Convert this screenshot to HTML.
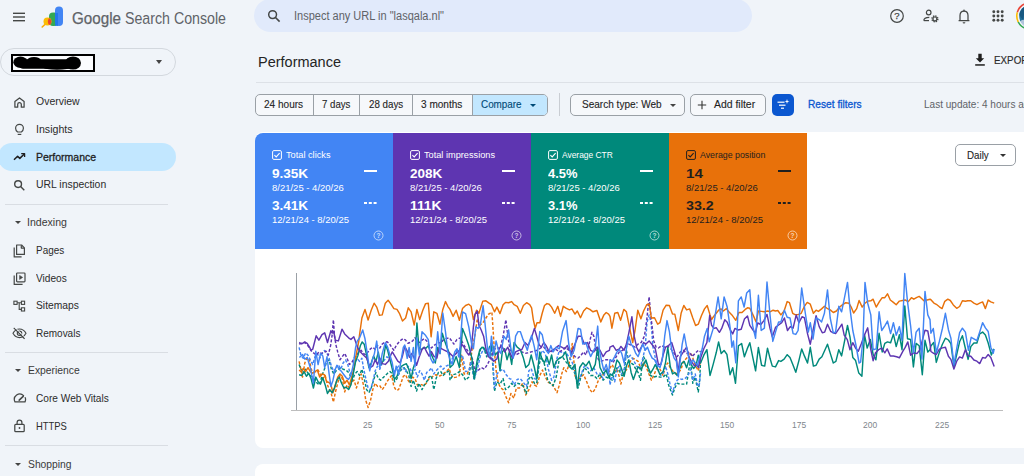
<!DOCTYPE html>
<html><head><meta charset="utf-8"><title>Performance</title>
<style>
*{box-sizing:border-box;margin:0;padding:0}
html,body{width:1024px;height:476px;overflow:hidden;background:#f0f4f9;font-family:"Liberation Sans",sans-serif;color:#1f1f1f}
.abs{position:absolute}
.tx{position:absolute;white-space:nowrap;transform-origin:0 50%;line-height:1}
#search{position:absolute;left:254px;top:-1px;width:498px;height:33.2px;border-radius:16.6px;background:#e1eafb}
#prop{position:absolute;left:0px;top:48px;width:176px;height:28px;border:1px solid #d3d8de;border-radius:14px}
#redact{position:absolute;left:10.5px;top:53.8px;width:84px;height:18.5px;border:2px solid #000;background:#fbfcfe}

.hr{position:absolute;left:5px;width:163px;height:1px;background:#d9dde3}
#active{position:absolute;left:-2px;top:143px;width:178px;height:28px;border-radius:14px;background:#c2e7ff}
.tri{position:absolute;width:0;height:0;border-left:3px solid transparent;border-right:3px solid transparent;border-top:4px solid #444}
#line1{position:absolute;left:256px;top:82px;width:768px;height:1px;background:#dde1e7}
#card{position:absolute;left:255px;top:132px;width:780px;height:315.5px;background:#fff;border-radius:8px}
#card2{position:absolute;left:255px;top:464px;width:780px;height:30px;background:#fff;border-radius:8px}
.m{position:absolute;top:133px;height:116px}
.chip{position:absolute;top:94px;height:22px;border:1px solid #9aa0a6;border-radius:5px;background:#f6f8fb}
</style></head><body>
<svg class="abs" style="left:12px;top:10.7px" width="14" height="12" viewBox="0 0 14 12"><g stroke="#444746" stroke-width="1.4"><line x1="1" y1="2.3" x2="13" y2="2.3"/><line x1="1" y1="6" x2="13" y2="6"/><line x1="1" y1="9.7" x2="13" y2="9.7"/></g></svg>
<svg class="abs" style="left:40px;top:5px" width="26" height="24" viewBox="0 0 26 24">
<line x1="2.2" y1="22" x2="6" y2="18.5" stroke="#f9ab00" stroke-width="1.6" stroke-linecap="round"/>
<rect x="9" y="7.5" width="9" height="13.5" rx="4" fill="#34a853"/>
<rect x="15" y="1.5" width="8" height="19.5" rx="4" fill="#4285f4"/>
<rect x="15" y="8" width="3" height="13" fill="#1a73e8" opacity=".75"/>
<circle cx="7.5" cy="16.5" r="4" fill="#fbbc04"/>
<path d="M9.2 12.9 A4 4 0 0 1 9.2 20.1 A6 6 0 0 1 9.2 12.9Z" fill="#ea4335"/>
</svg>
<div class="tx" id="t0" style="left:72px;top:9.8px;font-size:17.2px;transform:scaleX(0.8839);color:#5f6368;-webkit-text-stroke:.25px #5f6368">Google</div>
<div class="tx" id="t1" style="left:125px;top:9.8px;font-size:17.2px;transform:scaleX(0.8259);color:#5f6368">Search Console</div>
<div id="search"></div>
<svg class="abs" style="left:267px;top:9px" width="14" height="14" viewBox="0 0 14 14"><circle cx="5.6" cy="5.6" r="3.9" fill="none" stroke="#444746" stroke-width="1.5"/><line x1="8.5" y1="8.5" x2="12.6" y2="12.6" stroke="#444746" stroke-width="1.6"/></svg>
<div class="tx" id="t2" style="left:294px;top:10px;font-size:12px;transform:scaleX(0.9174);color:#5f6368">Inspect any URL in "lasqala.nl"</div>
<svg class="abs" style="left:889px;top:8px" width="16" height="16" viewBox="0 0 16 16"><circle cx="8" cy="8" r="6.3" fill="none" stroke="#444746" stroke-width="1.2"/><text x="8" y="11.4" font-size="9.5" font-family="Liberation Sans,sans-serif" text-anchor="middle" fill="#444746" stroke="#444746" stroke-width=".25">?</text></svg>
<svg class="abs" style="left:922px;top:8px" width="18" height="16" viewBox="0 0 18 16"><circle cx="6.7" cy="4.5" r="2.3" fill="none" stroke="#444746" stroke-width="1.2"/><path d="M1.8 12.6 C1.8 10.4 4 9.4 7.3 9.4" fill="none" stroke="#444746" stroke-width="1.2"/><line x1="1.8" y1="12.6" x2="7" y2="12.6" stroke="#444746" stroke-width="1.2"/><circle cx="12.9" cy="10.9" r="2.9" fill="none" stroke="#444746" stroke-width="1.5" stroke-dasharray="1.35 0.93"/><circle cx="12.9" cy="10.9" r="1.9" fill="none" stroke="#444746" stroke-width="1.2"/></svg>
<svg class="abs" style="left:955.6px;top:7.6px" width="16" height="18" viewBox="0 0 16 18"><path d="M4 12.6 V7.6 C4 4.8 5.6 3.1 8 3.1 C10.4 3.1 12 4.8 12 7.6 V12.6 M2.6 12.6 H13.4" fill="none" stroke="#444746" stroke-width="1.25"/><path d="M6.6 14.2 H9.4 A1.4 1.2 0 0 1 6.6 14.2Z" fill="#444746"/><rect x="7.3" y="1.6" width="1.4" height="1.8" rx=".5" fill="#444746"/></svg>
<svg class="abs" style="left:990.6px;top:9.3px" width="14" height="14" viewBox="0 0 14 14" fill="#444746"><circle cx="2.8" cy="2.8" r="1.45"/><circle cx="7.0" cy="2.8" r="1.45"/><circle cx="11.2" cy="2.8" r="1.45"/><circle cx="2.8" cy="7.0" r="1.45"/><circle cx="7.0" cy="7.0" r="1.45"/><circle cx="11.2" cy="7.0" r="1.45"/><circle cx="2.8" cy="11.2" r="1.45"/><circle cx="7.0" cy="11.2" r="1.45"/><circle cx="11.2" cy="11.2" r="1.45"/></svg>
<svg class="abs" style="left:1015px;top:1.3px" width="30" height="30" viewBox="0 0 30 30"><path d="M21.60 3.57 A13.2 13.2 0 0 0 2.31 11.36" fill="none" stroke="#ea4335" stroke-width="1.6"/><path d="M2.31 11.36 A13.2 13.2 0 0 0 3.24 20.99" fill="none" stroke="#fbbc04" stroke-width="1.6"/><path d="M3.24 20.99 A13.2 13.2 0 0 0 21.60 26.43" fill="none" stroke="#34a853" stroke-width="1.6"/><circle cx="15" cy="15" r="10.8" fill="#1f6f9a"/><path d="M5.5 20 Q9 17 12 21 L12 27 Q7 25 5.5 20Z" fill="#c9d3e6" opacity=".85"/><path d="M4.3 14 A10.8 10.8 0 0 1 9 6 L11 10 Q8 14 8 19 Z" fill="#15527a" opacity=".8"/></svg>
<div id="prop"></div><div id="redact"></div><svg class="abs" style="left:12px;top:55px" width="72" height="16" viewBox="0 0 72 16"><ellipse cx="8.5" cy="7.3" rx="7.2" ry="5.7" fill="#000"/><rect x="8" y="4.2" width="52" height="9.6" rx="3" fill="#000"/><ellipse cx="22" cy="5.5" rx="7" ry="3.6" fill="#000"/><ellipse cx="61" cy="8" rx="8" ry="6.6" fill="#000"/><ellipse cx="45" cy="12.2" rx="14" ry="2.6" fill="#000"/></svg><div class="tri" style="left:156px;top:60px"></div>
<div id="active"></div>
<div class="tx" id="t3" style="left:35.7px;top:96.2px;font-size:10.8px;transform:scaleX(0.9711);color:#2b2b2b;">Overview</div>
<div class="tx" id="t4" style="left:35.7px;top:123.99999999999999px;font-size:10.8px;transform:scaleX(0.9834);color:#2b2b2b;">Insights</div>
<div class="tx" id="t5" style="left:35.7px;top:151.70000000000002px;font-size:10.8px;transform:scaleX(0.9723);-webkit-text-stroke:.3px currentColor;">Performance</div>
<div class="tx" id="t6" style="left:35.7px;top:179.20000000000002px;font-size:10.8px;transform:scaleX(0.9639);color:#2b2b2b;">URL inspection</div>
<div class="tx" id="t7" style="left:35.7px;top:245.0px;font-size:10.8px;transform:scaleX(0.9208);color:#2b2b2b;">Pages</div>
<div class="tx" id="t8" style="left:35.7px;top:272.6px;font-size:10.8px;transform:scaleX(0.9382);color:#2b2b2b;">Videos</div>
<div class="tx" id="t9" style="left:35.8px;top:300.3px;font-size:10.8px;transform:scaleX(0.9508);color:#2b2b2b;">Sitemaps</div>
<div class="tx" id="t10" style="left:35.8px;top:327.8px;font-size:10.8px;transform:scaleX(0.9247);color:#2b2b2b;">Removals</div>
<div class="tx" id="t11" style="left:35.8px;top:393.3px;font-size:10.8px;transform:scaleX(0.9378);color:#2b2b2b;">Core Web Vitals</div>
<div class="tx" id="t12" style="left:35.8px;top:420.8px;font-size:10.8px;transform:scaleX(0.8731);color:#2b2b2b;">HTTPS</div>
<div class="tx" id="t13" style="left:27.3px;top:217.20000000000002px;font-size:10.8px;transform:scaleX(0.9773);color:#3a3a3a">Indexing</div>
<div class="tri" style="left:15px;top:221.1px;border-left-width:3px;border-right-width:3px;border-top-width:3.5px"></div>
<div class="tx" id="t14" style="left:27.6px;top:365.3px;font-size:10.8px;transform:scaleX(0.9587);color:#3a3a3a">Experience</div>
<div class="tri" style="left:15px;top:369.2px;border-left-width:3px;border-right-width:3px;border-top-width:3.5px"></div>
<div class="tx" id="t15" style="left:27.6px;top:458.8px;font-size:10.8px;transform:scaleX(0.9553);color:#3a3a3a">Shopping</div>
<div class="tri" style="left:15px;top:462.7px;border-left-width:3px;border-right-width:3px;border-top-width:3.5px"></div>
<div class="hr" style="top:204px"></div>
<div class="hr" style="top:352px"></div>
<div class="hr" style="top:445px"></div>
<svg class="abs" style="left:13px;top:95.5px" width="13" height="13" viewBox="0 0 13 13" fill="none" stroke="#444746" stroke-width="1.25" stroke-linejoin="round"><path d="M1.9 11.2 V5.6 L6.5 1.9 L11.1 5.6 V11.2 H8.3 V8.4 A1.8 1.8 0 0 0 4.7 8.4 V11.2 Z"/></svg>
<svg class="abs" style="left:13px;top:123px" width="13" height="13" viewBox="0 0 13 13" fill="none" stroke="#444746" stroke-width="1.2"><path d="M4.6 9 C3.3 8 2.6 7 2.6 5.3 A3.9 3.9 0 0 1 10.4 5.3 C10.4 7 9.7 8 8.4 9 Z"/><line x1="4.7" y1="11.4" x2="8.3" y2="11.4"/></svg>
<svg class="abs" style="left:13px;top:151px" width="13" height="12" viewBox="0 0 13 12" fill="none" stroke="#1f1f1f" stroke-width="1.5" stroke-linejoin="round"><path d="M1 8.8 L4.6 5.2 L6.8 7.4 L11 3.2"/><path d="M8.2 2.6 H11.6 V6" stroke-width="1.3"/></svg>
<svg class="abs" style="left:13px;top:179px" width="13" height="13" viewBox="0 0 13 13" fill="none" stroke="#444746" stroke-width="1.4"><circle cx="5.1" cy="5.1" r="3.4"/><line x1="7.6" y1="7.6" x2="11.3" y2="11.3"/></svg>
<svg class="abs" style="left:12.5px;top:243.5px" width="13" height="14" viewBox="0 0 13 14" fill="none" stroke="#444746" stroke-width="1.2" stroke-linejoin="round"><path d="M3.6 1 H8.6 L11.4 3.8 V10.4 H3.6 Z"/><path d="M8.3 1.2 V4.1 H11.2"/><path d="M1.2 3.6 V12.9 H8.6"/></svg>
<svg class="abs" style="left:12.5px;top:271.5px" width="13" height="14" viewBox="0 0 13 14" fill="none" stroke="#444746" stroke-width="1.2" stroke-linejoin="round"><rect x="3.6" y="1" width="8.4" height="8.8" rx="0.8"/><path d="M6.6 3.4 L9.6 5.4 L6.6 7.4 Z" fill="#444746" stroke-width=".6"/><path d="M1.2 3.4 V12.4 H9.6"/></svg>
<svg class="abs" style="left:13px;top:299.5px" width="13" height="13" viewBox="0 0 13 13" fill="none" stroke="#444746" stroke-width="1.1"><rect x="0.9" y="1.2" width="3.2" height="3.2"/><rect x="8.4" y="1.2" width="3.2" height="3.2"/><rect x="8.4" y="7.8" width="3.2" height="3.2"/><path d="M4.1 2.8 H8.4 M6.2 2.8 V9.4 H8.4"/></svg>
<svg class="abs" style="left:12px;top:327px" width="15" height="13" viewBox="0 0 15 13" fill="none" stroke="#444746" stroke-width="1.15"><path d="M1 6.3 C2.6 3.4 4.8 2 7.5 2 C10.2 2 12.4 3.4 14 6.3 C12.4 9.2 10.2 10.6 7.5 10.6 C4.8 10.6 2.6 9.2 1 6.3Z"/><circle cx="7.5" cy="6.3" r="2.2"/><line x1="1.8" y1="0.9" x2="12.6" y2="11.8" stroke-width="1.3"/><line x1="2.8" y1="0.2" x2="13.6" y2="11.1" stroke="#f0f4f9" stroke-width="1"/></svg>
<svg class="abs" style="left:12.5px;top:392px" width="14" height="13" viewBox="0 0 14 13" fill="none" stroke="#444746" stroke-width="1.25" stroke-linecap="round"><path d="M10.6 3.6 A5.4 5.4 0 0 0 2 9.9 H12 A5.4 5.4 0 0 0 12.2 5.6"/><path d="M6.2 8.2 L10.2 4.4" stroke-width="1.6"/></svg>
<svg class="abs" style="left:13px;top:419px" width="13" height="14" viewBox="0 0 13 14" fill="none" stroke="#444746" stroke-width="1.25"><rect x="1.8" y="5.4" width="9.4" height="7.2" rx="0.9"/><path d="M4.1 5.4 V3.6 A2.4 2.4 0 0 1 8.9 3.6 V5.4"/><circle cx="6.5" cy="9" r="0.9" fill="#444746" stroke="none"/></svg>

<div class="tx" id="t16" style="left:258px;top:54.6px;font-size:14.7px;transform:scaleX(0.9870);color:#242424">Performance</div>
<svg class="abs" style="left:974px;top:53px" width="12" height="14" viewBox="0 0 12 14" fill="#1f1f1f"><path d="M4.3 0.8 H7.7 V5.2 H10.2 L6 9.6 L1.8 5.2 H4.3Z"/><rect x="1.2" y="11.2" width="9.6" height="1.5"/></svg>
<div class="tx" id="t17" style="left:993.8px;top:56.3px;font-size:10.4px;transform:scaleX(0.9448);-webkit-text-stroke:.15px currentColor;color:#2b2b2b">EXPORT</div>
<div id="line1"></div>
<div class="abs" style="left:255px;top:94px;width:293px;height:22px;border:1px solid #9aa0a6;border-radius:5px;background:#f6f8fb;overflow:hidden">
 <div class="abs" style="left:216px;top:-1px;width:77px;height:22px;background:#c2e7ff"></div>
 <div class="abs" style="left:56.5px;top:-1px;width:1px;height:22px;background:#9aa0a6"></div>
 <div class="abs" style="left:103px;top:-1px;width:1px;height:22px;background:#9aa0a6"></div>
 <div class="abs" style="left:156px;top:-1px;width:1px;height:22px;background:#9aa0a6"></div>
 <div class="abs" style="left:215.5px;top:-1px;width:1px;height:22px;background:#9aa0a6"></div>
</div>
<div class="tx" id="t18" style="left:264.2px;top:100.2px;font-size:10.3px;transform:scaleX(0.9756);-webkit-text-stroke:.12px currentColor;">24 hours</div>
<div class="tx" id="t19" style="left:321.8px;top:100.2px;font-size:10.3px;transform:scaleX(0.9359);-webkit-text-stroke:.12px currentColor;">7 days</div>
<div class="tx" id="t20" style="left:368.7px;top:100.2px;font-size:10.3px;transform:scaleX(0.9479);-webkit-text-stroke:.12px currentColor;">28 days</div>
<div class="tx" id="t21" style="left:421.4px;top:100.2px;font-size:10.3px;transform:scaleX(0.9774);-webkit-text-stroke:.12px currentColor;">3 months</div>
<div class="tx" id="t22" style="left:480.7px;top:100.2px;font-size:10.3px;transform:scaleX(0.9585);-webkit-text-stroke:.12px currentColor;color:#004a77">Compare</div>
<div class="tri" style="left:529.5px;top:104px;border-top-color:#004a77;border-left-width:3px;border-right-width:3px;border-top-width:3.5px"></div>
<div class="abs" style="left:559px;top:93px;width:1px;height:23px;background:#c9cdd3"></div>
<div class="chip" style="left:570px;width:115px"></div>
<div class="tx" id="t23" style="left:581.5px;top:100.2px;font-size:10.3px;transform:scaleX(0.9748);-webkit-text-stroke:.12px currentColor;">Search type: Web</div>
<div class="tri" style="left:669.5px;top:104px;border-left-width:3px;border-right-width:3px;border-top-width:3.5px"></div>
<div class="chip" style="left:690px;width:76px"></div>
<svg class="abs" style="left:697px;top:100px" width="10" height="10" viewBox="0 0 10 10"><path d="M5 0.8V9.2M0.8 5H9.2" stroke="#333" stroke-width="1.1"/></svg>
<div class="tx" id="t24" style="left:713.9px;top:100.2px;font-size:10.3px;transform:scaleX(1.0113);-webkit-text-stroke:.12px currentColor;">Add filter</div>
<div class="abs" style="left:772px;top:94px;width:22px;height:22px;border-radius:5px;background:#0b57d0"></div>
<svg class="abs" style="left:776px;top:98px" width="14" height="14" viewBox="0 0 14 14"><g stroke="#fff" stroke-width="1.2"><line x1="1.5" y1="4.2" x2="8.5" y2="4.2"/><line x1="3" y1="7.2" x2="9.5" y2="7.2"/><line x1="5" y1="10.2" x2="8" y2="10.2"/></g><path d="M11 1 L11.6 2.9 L13.5 3.5 L11.6 4.1 L11 6 L10.4 4.1 L8.5 3.5 L10.4 2.9Z" fill="#fff"/></svg>
<div class="tx" id="t25" style="left:808.3px;top:100.2px;font-size:10.3px;transform:scaleX(0.9876);-webkit-text-stroke:.3px currentColor;color:#0b57d0">Reset filters</div>
<div class="tx" id="t26" style="left:924px;top:100.2px;font-size:10.3px;transform:scaleX(0.9742);color:#5f6368">Last update: 4 hours ago</div>
<div id="card"></div><div id="card2"></div>
<div class="m" style="left:255px;width:138px;background:#4285f4;border-radius:8px 0 0 0;"></div>
<svg class="abs" style="left:271.5px;top:150px" width="10" height="10" viewBox="0 0 10 10"><rect x="0.6" y="0.6" width="8.8" height="8.8" rx="1.3" fill="none" stroke="#fff" stroke-width="1"/><path d="M2.4 5.1 L4.2 6.9 L7.6 3.2" fill="none" stroke="#fff" stroke-width="1.1"/></svg>
<div class="tx" id="t27" style="left:285.5px;top:149.8px;font-size:9.6px;transform:scaleX(0.9592);color:#fff">Total clicks</div>
<div class="tx" id="t28" style="left:271.9px;top:166.9px;font-size:13.6px;color:#fff;font-weight:bold">9.35K</div>
<div class="tx" id="t29" style="left:271.9px;top:182.7px;font-size:9.4px;transform:scaleX(1.0128);color:#fff">8/21/25 - 4/20/26</div>
<div class="tx" id="t30" style="left:271.9px;top:199.3px;font-size:13.6px;color:#fff;font-weight:bold">3.41K</div>
<div class="tx" id="t31" style="left:271.9px;top:214.9px;font-size:9.4px;transform:scaleX(1.0117);color:#fff">12/21/24 - 8/20/25</div>
<div class="abs" style="left:363.5px;top:170.4px;width:13px;height:2px;background:#fff"></div>
<div class="abs" style="left:363.5px;top:202.2px;width:3.4px;height:1.8px;background:#fff;box-shadow:4.8px 0 0 #fff,9.6px 0 0 #fff"></div>
<svg class="abs" style="left:373.2px;top:230.2px;opacity:.7" width="11" height="11" viewBox="0 0 11 11"><circle cx="5.5" cy="5.5" r="4.5" fill="none" stroke="#fff" stroke-width="0.9"/><text x="5.5" y="8" font-size="6.5" font-family="Liberation Sans,sans-serif" text-anchor="middle" fill="#fff" font-weight="bold">?</text></svg>
<div class="m" style="left:393px;width:138px;background:#5e35b1;"></div>
<svg class="abs" style="left:409.5px;top:150px" width="10" height="10" viewBox="0 0 10 10"><rect x="0.6" y="0.6" width="8.8" height="8.8" rx="1.3" fill="none" stroke="#fff" stroke-width="1"/><path d="M2.4 5.1 L4.2 6.9 L7.6 3.2" fill="none" stroke="#fff" stroke-width="1.1"/></svg>
<div class="tx" id="t32" style="left:423.5px;top:149.8px;font-size:9.6px;transform:scaleX(0.9578);color:#fff">Total impressions</div>
<div class="tx" id="t33" style="left:409.9px;top:166.9px;font-size:13.6px;transform:scaleX(0.9938);color:#fff;font-weight:bold">208K</div>
<div class="tx" id="t34" style="left:409.9px;top:182.7px;font-size:9.4px;transform:scaleX(1.0128);color:#fff">8/21/25 - 4/20/26</div>
<div class="tx" id="t35" style="left:409.9px;top:199.3px;font-size:13.6px;transform:scaleX(1.0161);color:#fff;font-weight:bold">111K</div>
<div class="tx" id="t36" style="left:409.9px;top:214.9px;font-size:9.4px;transform:scaleX(1.0117);color:#fff">12/21/24 - 8/20/25</div>
<div class="abs" style="left:501.5px;top:170.4px;width:13px;height:2px;background:#fff"></div>
<div class="abs" style="left:501.5px;top:202.2px;width:3.4px;height:1.8px;background:#fff;box-shadow:4.8px 0 0 #fff,9.6px 0 0 #fff"></div>
<svg class="abs" style="left:511.2px;top:230.2px;opacity:.7" width="11" height="11" viewBox="0 0 11 11"><circle cx="5.5" cy="5.5" r="4.5" fill="none" stroke="#fff" stroke-width="0.9"/><text x="5.5" y="8" font-size="6.5" font-family="Liberation Sans,sans-serif" text-anchor="middle" fill="#fff" font-weight="bold">?</text></svg>
<div class="m" style="left:531px;width:138px;background:#00897b;"></div>
<svg class="abs" style="left:547.5px;top:150px" width="10" height="10" viewBox="0 0 10 10"><rect x="0.6" y="0.6" width="8.8" height="8.8" rx="1.3" fill="none" stroke="#fff" stroke-width="1"/><path d="M2.4 5.1 L4.2 6.9 L7.6 3.2" fill="none" stroke="#fff" stroke-width="1.1"/></svg>
<div class="tx" id="t37" style="left:561.5px;top:149.8px;font-size:9.6px;transform:scaleX(0.8766);color:#fff">Average CTR</div>
<div class="tx" id="t38" style="left:547.9px;top:166.9px;font-size:13.6px;transform:scaleX(0.9489);color:#fff;font-weight:bold">4.5%</div>
<div class="tx" id="t39" style="left:547.9px;top:182.7px;font-size:9.4px;transform:scaleX(1.0128);color:#fff">8/21/25 - 4/20/26</div>
<div class="tx" id="t40" style="left:547.9px;top:199.3px;font-size:13.6px;transform:scaleX(0.9489);color:#fff;font-weight:bold">3.1%</div>
<div class="tx" id="t41" style="left:547.9px;top:214.9px;font-size:9.4px;transform:scaleX(1.0117);color:#fff">12/21/24 - 8/20/25</div>
<div class="abs" style="left:639.5px;top:170.4px;width:13px;height:2px;background:#fff"></div>
<div class="abs" style="left:639.5px;top:202.2px;width:3.4px;height:1.8px;background:#fff;box-shadow:4.8px 0 0 #fff,9.6px 0 0 #fff"></div>
<svg class="abs" style="left:649.2px;top:230.2px;opacity:.7" width="11" height="11" viewBox="0 0 11 11"><circle cx="5.5" cy="5.5" r="4.5" fill="none" stroke="#fff" stroke-width="0.9"/><text x="5.5" y="8" font-size="6.5" font-family="Liberation Sans,sans-serif" text-anchor="middle" fill="#fff" font-weight="bold">?</text></svg>
<div class="m" style="left:669px;width:138px;background:#e8710a;"></div>
<svg class="abs" style="left:685.5px;top:150px" width="10" height="10" viewBox="0 0 10 10"><rect x="0.6" y="0.6" width="8.8" height="8.8" rx="1.3" fill="none" stroke="#1f1f1f" stroke-width="1"/><path d="M2.4 5.1 L4.2 6.9 L7.6 3.2" fill="none" stroke="#1f1f1f" stroke-width="1.1"/></svg>
<div class="tx" id="t42" style="left:699.5px;top:149.8px;font-size:9.6px;transform:scaleX(0.9159);color:#1f1f1f">Average position</div>
<div class="tx" id="t43" style="left:685.9px;top:166.9px;font-size:13.6px;transform:scaleX(1.1174);color:#1f1f1f;font-weight:bold">14</div>
<div class="tx" id="t44" style="left:685.9px;top:182.7px;font-size:9.4px;transform:scaleX(1.0128);color:#1f1f1f">8/21/25 - 4/20/26</div>
<div class="tx" id="t45" style="left:685.9px;top:199.3px;font-size:13.6px;transform:scaleX(1.0465);color:#1f1f1f;font-weight:bold">33.2</div>
<div class="tx" id="t46" style="left:685.9px;top:214.9px;font-size:9.4px;transform:scaleX(1.0117);color:#1f1f1f">12/21/24 - 8/20/25</div>
<div class="abs" style="left:777.5px;top:170.4px;width:13px;height:2px;background:#1f1f1f"></div>
<div class="abs" style="left:777.5px;top:202.2px;width:3.4px;height:1.8px;background:#1f1f1f;box-shadow:4.8px 0 0 #1f1f1f,9.6px 0 0 #1f1f1f"></div>
<svg class="abs" style="left:787.2px;top:230.2px;opacity:.7" width="11" height="11" viewBox="0 0 11 11"><circle cx="5.5" cy="5.5" r="4.5" fill="none" stroke="#fff" stroke-width="0.9"/><text x="5.5" y="8" font-size="6.5" font-family="Liberation Sans,sans-serif" text-anchor="middle" fill="#fff" font-weight="bold">?</text></svg>
<div class="abs" style="left:955px;top:144px;width:61px;height:22px;border:1px solid #9aa0a6;border-radius:5px;background:#fff"></div>
<div class="tx" id="t47" style="left:967.3px;top:149.5px;font-size:10.8px;transform:scaleX(0.9042);-webkit-text-stroke:.12px currentColor;">Daily</div>
<div class="tri" style="left:1000px;top:153.5px;border-left-width:3px;border-right-width:3px;border-top-width:3.5px;border-top-color:#333"></div>
<div class="abs" style="left:296px;top:273px;width:1px;height:138px;background:#9aa0a6"></div>
<div class="abs" style="left:291px;top:410px;width:712px;height:1px;background:#bdbdbd"></div>
<div class="tx" id="t48" style="left:363.3px;top:421px;font-size:8.8px;transform:scaleX(0.9595);color:#80868b">25</div>
<div class="tx" id="t49" style="left:435.3px;top:421px;font-size:8.8px;transform:scaleX(0.9595);color:#80868b">50</div>
<div class="tx" id="t50" style="left:506.8px;top:421px;font-size:8.8px;transform:scaleX(0.9595);color:#80868b">75</div>
<div class="tx" id="t51" style="left:576.25px;top:421px;font-size:8.8px;transform:scaleX(0.9600);color:#80868b">100</div>
<div class="tx" id="t52" style="left:647.95px;top:421px;font-size:8.8px;transform:scaleX(0.9600);color:#80868b">125</div>
<div class="tx" id="t53" style="left:719.95px;top:421px;font-size:8.8px;transform:scaleX(0.9600);color:#80868b">150</div>
<div class="tx" id="t54" style="left:791.95px;top:421px;font-size:8.8px;transform:scaleX(0.9600);color:#80868b">175</div>
<div class="tx" id="t55" style="left:863.45px;top:421px;font-size:8.8px;transform:scaleX(0.9600);color:#80868b">200</div>
<div class="tx" id="t56" style="left:934.95px;top:421px;font-size:8.8px;transform:scaleX(0.9600);color:#80868b">225</div>
<svg class="abs" style="left:0;top:0" width="1024" height="476" viewBox="0 0 1024 476" fill="none" stroke-linejoin="round">
<polyline points="299.1,361.4 300.9,369.2 302.5,377.1 304.8,363.0 307.2,357.5 309.5,359.9 311.1,369.2 313.4,372.4 315.8,371.6 318.1,370.0 320.5,374.7 322.8,378.6 325.2,375.5 327.5,384.9 329.8,391.1 331.4,394.2 333.4,402.1 335.3,392.7 337.7,383.3 340.0,375.5 342.3,378.6 344.7,391.9 347.0,384.9 349.4,388.0 351.7,381.8 354.1,380.2 356.4,388.0 358.8,380.2 361.1,373.9 363.4,384.9 365.8,400.5 368.1,407.5 370.5,400.5 372.8,389.6 375.2,383.3 377.5,386.4 379.8,385.7 382.2,389.6 384.5,386.4 386.9,381.8 389.2,378.6 391.6,375.5 393.9,386.4 396.2,390.3 398.6,389.6 400.9,383.3 403.3,376.3 405.6,374.7 408.0,380.2 410.3,383.3 412.7,377.1 415.0,378.6 417.3,384.9 419.7,384.1 422.0,384.9 424.4,385.7 426.7,382.5 429.1,378.6 431.4,377.8 433.8,375.5 436.1,374.7 438.4,376.3 440.8,375.5 443.1,373.9 446.2,371.6 449.4,368.5 450.0,371.6 453.1,377.8 456.2,377.1 459.4,375.5 461.7,355.2 464.1,373.9 467.2,373.9 469.5,369.2 471.9,350.5 475.0,334.7 477.3,319.1 479.7,325.3 482.8,323.0 485.2,319.1 488.3,314.4 491.9,312.1 493.0,328.5 494.5,351.9 496.1,370.7 498.4,383.3 500.8,388.0 503.1,389.6 506.2,397.4 508.6,402.8 510.9,393.5 513.8,398.2 516.4,388.0 519.5,388.0 522.7,383.3 525.8,395.0 528.9,389.6 532.0,381.8 534.4,384.9 536.7,386.4 539.8,375.5 542.5,370.0 545.3,377.1 548.4,382.5 551.6,383.3 554.4,388.0 557.0,392.7 559.4,384.9 561.7,373.9 563.8,367.7 566.4,371.6 568.8,365.3 571.1,352.1 572.2,343.5 573.4,355.2 575.0,375.5 577.3,381.8 580.5,377.1 583.6,374.7 586.7,381.8 589.8,389.6 592.5,392.7 595.3,388.8 598.4,380.2 600.8,377.1 603.9,373.9 606.2,369.2 609.4,371.6 610.0,367.7 612.3,364.6 614.7,370.8 617.0,369.2 619.4,377.1 620.9,384.1 623.3,373.9 625.6,370.8 628.0,367.7 630.3,361.4 632.7,358.3 635.0,359.1 638.1,361.4 641.2,369.2 643.6,363.0 645.9,366.1 648.3,372.4 651.4,380.2 653.8,375.5 656.9,367.7 660.0,369.2 663.1,375.5 665.5,366.1 667.8,363.0 670.2,367.7 672.5,370.8 675.6,373.9 678.8,372.4 681.1,369.2 683.4,361.4 686.6,358.3 689.7,352.8 692.0,355.2 694.4,363.0 696.7,367.7 698.3,370.8 700.6,361.4" stroke="#e8710a" stroke-width="1.45" stroke-dasharray="3 1.8"/>
<polyline points="299.1,364.6 300.9,369.2 303.3,371.6 305.6,369.2 308.0,373.2 310.3,375.5 312.7,377.1 315.0,380.2 317.3,383.3 319.7,384.9 322.0,375.5 324.4,369.2 326.7,361.4 329.1,359.9 331.4,369.2 333.8,373.9 336.1,370.8 338.4,369.2 340.8,367.7 343.1,369.2 345.5,370.0 347.8,371.6 350.2,375.5 352.5,380.2 354.8,373.9 357.2,371.6 359.5,375.5 361.9,369.2 364.2,378.6 366.6,389.6 368.9,392.7 371.2,388.0 373.6,380.2 375.9,372.4 378.3,378.6 380.6,380.2 383.0,377.8 385.3,375.5 387.7,373.2 390.0,371.6 392.3,373.9 394.7,381.8 397.0,378.6 399.4,372.4 401.7,369.2 404.1,367.7 406.4,370.8 408.8,375.5 411.1,386.4 413.4,380.2 416.6,391.1 418.9,383.3 422.0,389.6 424.4,384.9 426.7,381.8 429.1,377.1 431.4,375.5 433.8,389.6 436.1,378.6 438.4,372.4 440.8,371.6 443.1,375.5 446.2,372.4 449.4,370.8 450.0,380.2 453.1,374.7 456.2,373.9 459.4,371.6 462.5,374.7 465.6,380.2 468.8,377.1 471.1,361.4 474.2,380.2 477.3,364.6 480.5,348.9 483.6,347.4 486.7,356.8 489.8,345.8 491.4,344.2 493.0,369.2 494.5,391.1 496.9,381.8 500.0,384.1 503.1,378.6 505.5,389.6 508.6,387.2 511.7,383.3 514.1,386.4 517.2,383.3 520.3,384.1 523.4,386.4 526.2,393.5 528.9,378.6 531.2,376.3 534.4,383.3 536.7,383.3 539.1,364.6 541.4,356.8 544.5,364.6 547.7,380.2 550.8,384.1 553.1,385.7 556.2,377.1 559.4,358.3 562.5,356.8 565.6,361.4 568.8,365.3 571.9,366.1 575.0,373.9 578.1,388.0 581.2,375.5 584.4,367.7 587.5,370.8 590.6,375.5 593.8,375.5 596.9,378.6 600.0,373.9 603.1,380.2 606.2,377.1 609.4,378.6 610.0,378.6 612.3,380.2 614.7,372.4 617.0,367.7 619.4,370.8 621.7,375.5 624.1,375.5 626.4,350.5 628.8,361.4 631.1,363.0 633.4,364.6 635.8,369.2 638.1,372.4 640.5,380.2 642.0,364.6 643.6,356.8 645.9,361.4 648.3,369.2 650.6,375.5 653.8,377.1 656.9,376.3 660.0,377.1 663.1,377.1 666.2,373.9 668.6,384.9 670.9,391.1 672.5,395.0 674.8,388.0 677.2,383.3 680.3,384.1 683.4,384.1 686.6,384.1 688.9,369.2 690.5,361.4 692.8,383.3 695.2,377.1 696.7,384.9 698.3,391.9 699.8,378.6 700.6,358.3" stroke="#00897b" stroke-width="1.45" stroke-dasharray="3 1.8"/>
<polyline points="299.1,347.4 300.9,355.2 303.3,358.3 305.6,352.8 308.0,355.2 310.3,359.9 312.7,364.6 315.0,356.8 317.3,353.6 319.7,358.3 322.0,353.6 324.4,350.5 326.7,352.8 329.1,358.3 331.4,366.1 333.8,371.6 336.1,367.7 338.4,364.6 340.8,369.2 343.1,363.0 345.5,359.9 347.8,364.6 350.2,373.9 352.5,370.8 354.8,363.0 357.2,358.3 359.5,361.4 361.9,358.3 363.4,367.7 365.8,378.6 368.1,388.0 370.5,389.6 372.8,381.8 375.2,370.8 377.5,366.1 379.8,369.2 382.2,363.0 384.5,359.9 386.9,356.8 389.2,358.3 391.6,363.0 393.9,372.4 396.2,369.2 398.6,366.1 400.9,370.0 403.3,367.7 405.6,371.6 408.0,366.1 410.3,369.2 412.7,373.9 415.0,369.2 417.3,377.1 419.7,370.8 422.0,373.9 424.4,380.2 426.7,372.4 429.1,370.8 431.4,367.7 433.8,373.9 436.1,370.8 438.4,368.5 440.8,366.1 443.1,369.2 446.2,366.1 449.4,364.6 453.1,356.8 456.2,350.5 459.4,358.3 462.5,355.2 465.6,371.6 468.8,370.8 471.1,361.4 474.2,378.6 477.3,369.2 480.5,355.2 483.6,348.9 486.7,353.6 489.8,347.4 491.4,342.7 493.0,361.4 494.5,388.0 496.9,373.9 500.0,370.8 503.1,369.2 506.2,374.7 509.4,378.6 511.7,379.4 514.1,384.9 517.2,379.4 520.3,378.6 523.4,382.5 526.6,386.4 528.9,370.8 531.2,368.5 534.4,378.6 536.7,379.4 539.1,358.3 542.2,350.5 545.3,353.6 548.4,369.2 551.6,380.2 553.9,377.1 557.0,358.3 559.4,350.5 562.5,353.6 565.6,352.1 568.8,356.8 571.9,361.4 575.0,371.6 578.1,383.3 581.2,373.9 584.4,366.1 587.5,367.7 590.6,370.8 593.8,367.7 596.9,373.9 600.0,373.2 603.1,378.6 606.2,369.2 609.4,375.5 610.0,384.9 612.3,373.9 614.7,381.8 617.0,369.2 619.4,366.1 621.7,373.9 624.1,369.2 625.6,353.6 628.0,358.3 630.3,355.2 633.4,359.9 636.6,366.1 639.7,369.2 642.8,358.3 645.2,347.4 647.0,322.4 649.1,314.9 651.1,322.4 653.0,347.4 656.1,361.4 658.4,370.8 660.8,375.5 663.1,373.2 665.5,366.1 667.8,373.9 670.2,384.9 672.5,392.7 674.8,384.9 677.2,380.2 679.5,378.6 681.9,379.4 685.0,378.6 688.1,375.5 690.5,369.2 692.8,380.2 695.2,373.9 697.5,384.9 699.1,386.4 700.6,372.4" stroke="#4285f4" stroke-width="1.45" stroke-dasharray="3 1.8"/>
<polyline points="299.1,344.1 301.7,343.3 304.8,342.5 307.2,344.8 309.5,348.0 311.9,351.9 314.2,353.4 316.6,355.0 318.9,351.9 321.2,353.4 323.6,352.7 325.9,351.1 328.3,355.0 330.6,345.6 332.2,334.7 333.4,319.8 334.5,336.2 336.1,345.6 337.7,351.9 340.0,359.7 342.3,356.6 344.7,353.4 347.0,358.1 349.4,364.4 351.7,362.8 354.1,358.1 356.4,355.8 358.8,351.9 361.1,350.3 363.4,353.4 365.8,355.0 368.1,351.9 370.5,348.8 372.8,347.2 375.2,349.5 377.5,345.6 379.8,348.0 382.2,344.1 384.5,342.5 386.9,341.7 389.2,343.3 391.6,347.2 393.9,350.3 396.2,345.6 398.6,342.5 400.9,340.2 403.3,338.6 405.6,340.2 408.0,343.3 410.3,342.5 412.7,340.9 415.0,337.8 417.3,340.9 419.7,342.5 422.0,340.2 424.4,338.6 426.7,340.9 429.1,345.6 431.4,348.0 433.8,345.6 436.1,344.1 438.4,342.5 440.8,343.3 443.1,340.2 446.2,338.6 449.4,337.8 453.9,344.1 457.0,339.4 460.2,337.8 463.3,344.1 466.4,348.8 469.5,353.4 472.7,359.7 475.0,372.2 478.1,370.6 481.2,367.5 484.4,369.1 487.5,364.4 490.6,358.1 493.8,350.3 496.9,347.2 500.0,348.8 503.1,336.2 505.9,319.8 507.8,336.2 510.2,350.3 512.5,351.9 515.6,355.0 518.8,353.4 521.9,351.9 525.0,353.4 528.1,352.7 531.2,351.9 534.4,351.1 537.5,350.3 540.6,348.0 543.8,347.2 546.9,350.3 550.0,351.9 553.1,351.1 556.2,349.5 559.4,351.9 562.5,350.3 565.6,347.2 568.8,350.3 571.9,353.4 575.0,356.6 578.1,358.1 581.2,355.0 583.6,351.9 585.9,355.0 589.1,344.1 591.9,332.3 593.8,336.2 596.1,350.3 598.4,359.7 601.6,361.2 604.7,359.7 607.8,359.7 610.0,359.7 613.1,362.8 616.2,356.6 619.4,351.9 622.5,350.3 625.6,347.2 628.8,344.1 631.9,345.6 635.0,347.2 638.1,344.1 641.2,342.5 644.4,336.2 646.7,320.6 649.1,296.9 651.4,320.6 653.8,340.9 656.1,347.2 658.4,348.0 661.6,345.6 664.7,347.2 667.8,346.4 670.9,348.8 674.1,353.4 677.2,356.6 680.3,351.9 683.4,350.3 686.6,353.4 689.7,351.9 692.0,356.6 695.2,353.4 698.3,350.3 700.6,351.9" stroke="#5e35b1" stroke-width="1.45" stroke-dasharray="3 1.8"/>
<polyline points="299.1,370.0 300.9,371.6 303.3,368.5 305.6,371.6 308.0,367.7 310.3,371.6 312.7,373.2 315.0,371.6 317.3,370.0 319.7,377.1 322.0,373.9 324.4,374.7 326.7,381.8 329.1,382.5 330.9,384.9 333.0,392.7 335.3,384.9 337.7,377.1 340.0,373.9 342.3,376.3 344.7,383.3 347.0,380.2 349.4,384.9 351.7,377.1 354.1,367.7 356.4,353.6 358.8,341.1 359.5,335.2 361.9,318.0 365.0,309.4 368.1,320.0 371.2,310.2 374.1,303.2 376.7,307.1 379.4,315.2 382.2,314.9 385.3,303.2 388.1,300.3 390.8,303.9 393.9,308.6 397.0,309.4 399.4,313.3 402.5,321.1 405.6,318.0 408.3,307.8 411.1,311.8 414.2,325.0 416.9,309.4 419.7,319.6 422.8,310.2 425.6,303.6 428.3,303.2 431.1,336.8 433.8,311.8 436.9,313.3 440.0,324.2 442.8,309.4 445.5,301.6 447.8,306.3 450.0,309.4 453.1,316.4 456.2,310.2 459.4,320.3 462.5,308.6 465.6,305.5 468.8,304.2 471.1,306.3 473.4,319.6 476.6,310.2 478.9,313.3 482.8,301.1 485.9,300.8 489.1,303.2 491.4,304.7 494.5,311.8 496.9,307.1 500.0,313.6 503.1,304.7 505.5,302.4 508.6,302.7 511.7,301.6 514.1,304.7 517.2,306.3 520.3,313.3 523.4,305.5 526.6,302.7 529.7,304.7 531.6,307.8 533.3,319.6 535.2,328.2 537.0,322.7 539.8,322.7 542.2,313.3 544.5,305.5 546.9,303.6 549.2,304.2 551.6,307.1 554.7,313.3 557.8,306.3 560.6,316.4 563.3,306.3 566.4,308.3 569.5,309.9 571.9,308.9 575.0,314.1 577.3,311.0 580.5,317.7 583.6,311.0 586.7,307.8 589.8,309.4 593.0,311.8 596.9,310.5 600.8,321.9 603.9,314.9 606.2,312.5 608.6,314.1 610.0,316.4 611.9,328.2 614.7,313.3 617.8,312.5 620.6,320.3 623.8,309.4 626.4,311.8 629.5,327.4 632.7,342.5 635.0,330.5 637.8,310.2 640.9,318.8 643.6,311.0 646.7,304.7 649.1,303.9 651.4,318.0 654.5,317.7 657.7,324.2 660.0,322.7 663.1,310.2 666.2,305.2 669.4,305.5 672.5,314.1 674.8,314.1 678.3,330.5 681.1,313.3 683.8,305.5 686.6,309.9 689.7,308.9 692.8,318.0 695.6,325.5 698.3,324.2 701.4,315.7 704.5,308.9 707.2,305.5 710.0,314.9 711.6,319.6 713.1,317.2 716.2,313.3 718.6,310.2 720.9,308.9 723.3,311.0 726.4,308.6 728.8,311.8 731.9,314.9 735.8,320.3 738.9,312.5 742.0,312.5 745.2,309.4 747.5,307.8 749.8,308.3 753.0,314.9 756.1,321.9 758.4,311.0 761.6,311.4 764.7,311.8 767.8,311.0 770.0,311.8 773.1,310.2 775.5,311.0 777.8,310.5 780.9,314.9 784.1,311.0 787.2,301.6 789.5,302.7 792.7,313.3 795.0,314.6 798.1,314.6 801.2,313.3 804.4,306.3 807.2,302.4 810.3,304.2 813.4,313.3 816.1,310.2 818.4,311.4 821.6,308.9 824.4,306.3 827.0,308.3 830.2,309.9 833.3,312.5 836.4,311.0 839.5,307.1 842.7,304.7 845.8,302.7 848.9,303.2 851.2,307.1 853.6,313.0 856.7,308.6 859.1,300.5 862.2,307.1 865.0,303.2 867.7,301.1 870.8,300.8 873.1,299.2 876.2,307.1 879.4,301.6 882.2,297.7 884.8,297.7 887.5,293.8 890.3,300.0 893.4,302.4 896.2,304.7 899.4,301.1 902.5,300.5 905.2,300.0 908.3,301.6 911.4,297.7 913.8,299.2 916.9,297.4 919.2,296.4 921.6,298.5 923.9,300.8 927.0,300.0 930.0,299.2 930.9,299.7 933.9,303.1 936.3,304.3 939.4,306.8 942.1,308.6 944.8,301.3 947.8,299.2 950.3,300.5 953.3,304.9 956.7,308.3 959.6,306.5 962.4,300.7 965.4,301.3 967.8,300.7 970.8,300.7 973.9,303.1 976.9,304.6 979.7,303.1 982.6,301.9 985.4,308.6 988.2,300.1 990.8,301.9 994.2,303.1" stroke="#e8710a" stroke-width="1.45"/>
<polyline points="299.1,374.7 301.7,375.5 304.1,371.6 306.4,376.3 308.8,373.2 311.1,378.6 313.4,388.0 315.8,377.1 318.1,381.8 320.5,384.1 322.8,377.8 325.2,384.9 327.5,393.5 329.8,389.6 332.2,392.7 334.5,388.0 336.9,380.2 339.2,377.1 341.6,383.3 343.9,388.0 346.2,387.2 348.6,389.6 350.9,384.9 353.3,373.9 355.6,361.4 358.0,355.2 360.3,345.8 362.2,341.9 364.2,344.2 366.6,355.2 368.9,367.7 371.2,363.0 373.6,356.0 375.9,361.4 378.3,352.1 380.6,364.6 383.0,361.4 385.6,345.0 387.7,350.5 390.0,359.9 392.3,369.2 394.4,379.4 397.0,376.3 399.4,369.2 401.7,366.1 404.1,364.6 406.4,363.8 408.8,369.2 411.1,378.6 413.4,367.7 415.0,363.0 416.9,323.0 418.9,347.4 421.2,349.7 423.6,347.4 425.9,348.2 428.3,345.8 430.6,352.8 433.0,358.3 435.3,363.0 437.7,347.4 440.0,353.6 442.3,333.3 444.7,341.1 447.0,347.4 449.4,353.6 450.0,367.5 453.1,364.4 456.2,356.6 459.4,367.5 462.5,328.4 465.6,336.2 468.8,345.6 471.9,358.1 474.2,378.4 477.3,359.7 479.7,350.3 482.0,347.2 484.4,348.8 487.5,353.4 489.8,356.6 492.2,344.1 495.3,355.0 497.7,351.9 500.0,370.6 502.3,351.9 504.7,348.8 507.0,359.7 509.4,351.9 511.7,364.4 514.1,342.5 517.2,347.2 520.3,349.5 523.4,358.1 525.8,367.5 528.9,364.4 531.2,355.0 534.4,367.5 536.7,379.1 539.8,351.9 542.2,359.7 544.5,362.8 546.9,356.6 549.2,364.4 551.6,355.0 553.9,367.5 556.2,361.2 559.4,358.1 562.5,356.6 565.6,351.9 568.8,365.9 571.9,369.1 575.0,364.4 577.3,388.0 579.7,367.5 582.8,362.8 585.9,365.9 589.1,361.2 592.2,370.6 595.3,364.4 597.7,347.2 600.0,367.5 603.1,373.8 606.2,370.6 609.4,378.4 610.0,373.9 612.3,375.5 614.7,369.2 617.0,359.9 619.4,363.0 621.7,369.2 624.1,376.3 626.4,366.1 628.8,359.9 631.1,372.4 633.4,379.4 635.8,372.4 638.1,366.9 641.2,369.2 643.6,364.6 645.9,359.9 648.3,367.7 650.6,373.2 653.0,369.2 655.3,364.6 657.7,369.2 660.0,374.7 663.1,371.6 665.5,363.0 667.8,347.4 670.2,366.1 672.5,373.9 674.8,372.4 677.2,375.5 679.5,369.2 681.9,363.0 684.2,361.4 686.6,367.7 688.9,359.9 691.2,364.6 693.6,368.5 695.9,366.1 698.3,355.2 700.6,363.0 703.8,355.2 706.9,349.7 710.0,375.5 713.1,364.6 716.2,352.8 718.6,341.9 721.2,353.6 724.1,350.5 726.9,354.4 730.0,374.7 732.7,367.7 735.5,383.3 738.4,345.8 741.6,343.5 744.4,356.8 747.2,348.9 749.8,342.7 753.0,358.3 755.6,370.8 758.4,347.4 761.6,365.3 764.7,366.1 767.5,348.2 770.0,358.3 772.3,366.1 775.5,366.9 778.6,360.6 780.9,361.4 784.1,359.1 787.2,354.7 790.0,357.5 793.1,365.3 795.8,372.3 798.9,360.6 801.7,348.9 804.4,355.9 807.5,363.0 810.3,347.3 813.4,366.1 816.1,365.3 819.2,359.1 821.9,356.7 824.7,350.5 827.5,344.2 830.6,354.4 833.3,363.0 835.9,361.4 838.8,349.7 841.6,355.9 844.7,340.3 847.5,325.5 850.0,337.2 852.8,357.5 855.6,360.6 858.8,373.1 861.9,376.2 864.5,334.8 867.2,348.1 870.3,339.5 873.1,354.4 875.9,359.8 879.1,333.3 882.2,352.0 884.8,343.4 887.5,341.9 890.6,342.7 893.4,334.1 896.2,346.6 899.4,334.8 902.0,349.7 904.8,305.9 907.5,338.8 910.6,339.5 913.4,366.9 916.1,343.4 919.2,345.8 922.3,374.7 925.0,340.3 927.8,352.0 930.0,349.7 930.9,346.0 933.7,342.4 936.3,362.4 939.4,352.1 942.4,344.2 945.4,338.2 948.4,340.0 950.9,343.6 953.9,366.6 956.7,354.5 959.6,341.8 962.4,335.7 965.4,348.5 968.1,359.4 970.8,346.6 973.9,343.0 976.9,343.0 979.7,333.9 982.6,332.1 985.4,335.1 988.2,343.0 991.4,355.1 993.2,349.7 994.2,349.1" stroke="#00897b" stroke-width="1.45"/>
<polyline points="299.1,342.5 301.7,343.8 304.8,342.0 307.2,343.3 309.5,347.2 311.1,350.3 312.7,349.2 316.2,335.8 318.9,340.2 322.0,334.7 324.7,332.8 327.5,342.5 330.9,330.8 332.2,333.1 333.8,331.6 335.3,340.2 338.4,340.9 342.0,329.2 344.7,333.9 348.6,337.8 350.9,339.4 353.8,336.7 355.6,341.7 357.5,347.2 359.5,351.1 361.9,353.4 364.2,355.8 366.6,358.1 368.9,364.4 370.5,367.5 372.8,365.9 375.2,359.7 377.5,364.4 379.8,358.1 382.2,363.6 385.3,364.4 388.4,361.2 390.8,355.0 392.3,351.9 394.7,355.8 397.8,361.2 400.2,362.8 402.5,355.8 404.8,346.4 407.2,351.1 409.5,357.3 411.9,353.4 414.2,358.1 416.6,365.2 418.9,357.8 422.0,349.5 424.4,347.2 426.7,351.9 429.1,356.2 431.4,351.6 433.8,356.2 436.9,358.1 439.2,347.2 442.3,349.2 444.7,350.3 447.8,351.9 450.0,353.4 453.1,356.6 456.2,353.4 459.4,350.3 461.7,344.1 464.1,347.2 466.4,351.9 468.8,355.0 471.1,350.3 473.4,326.9 475.0,314.4 477.3,311.2 478.9,325.3 481.2,330.0 483.6,336.2 485.9,348.8 488.3,356.6 490.6,358.1 493.8,361.2 496.9,358.9 499.2,348.8 501.6,345.6 504.7,351.9 507.8,347.2 510.2,353.4 512.5,358.1 515.6,351.9 518.8,350.3 521.9,349.5 525.0,342.5 528.1,345.6 531.2,338.6 534.4,328.4 536.7,336.2 539.1,344.8 541.4,347.2 543.8,342.5 546.1,345.6 549.2,351.9 552.3,350.3 555.5,348.0 558.6,345.6 561.7,347.2 564.8,348.8 567.2,345.6 569.5,350.3 571.9,351.9 575.0,344.1 578.1,336.2 581.2,336.2 584.4,344.1 587.5,342.5 590.6,350.3 593.8,351.9 596.9,347.2 600.0,350.3 603.1,356.6 606.2,351.9 609.4,350.3 610.0,347.2 613.1,345.6 616.2,350.3 619.4,348.8 620.9,346.4 624.1,350.3 626.4,344.1 628.8,333.1 631.9,316.7 634.2,336.2 636.6,347.2 638.9,351.9 641.2,347.2 643.6,342.5 645.9,344.1 649.1,340.9 652.2,344.8 655.3,348.8 658.4,364.4 660.8,364.4 663.1,355.0 665.5,347.2 668.6,345.6 671.7,342.5 674.1,350.3 676.4,358.1 678.0,372.2 680.3,356.6 683.4,351.9 686.6,347.2 688.9,356.6 691.2,361.2 694.4,365.9 696.7,364.4 698.3,367.5 700.6,358.1 703.8,348.8 706.9,342.5 709.7,315.2 711.6,325.3 713.9,328.4 716.2,327.7 719.4,332.3 721.7,328.4 724.8,319.8 727.2,322.2 730.3,330.0 732.7,333.9 735.0,328.4 738.1,330.0 741.2,329.2 744.4,319.1 747.5,315.9 749.8,325.3 753.0,330.0 755.3,333.1 757.7,323.0 760.8,324.5 763.9,320.6 767.0,314.4 770.0,328.4 772.3,336.8 775.5,327.4 778.6,325.0 781.7,322.7 784.4,318.0 787.5,330.5 790.3,326.6 793.1,328.2 796.2,314.9 798.9,322.7 802.0,316.8 804.4,317.7 807.5,333.6 810.3,344.2 813.0,330.5 816.1,315.7 819.2,326.6 822.3,332.8 824.7,332.1 827.5,324.2 830.6,331.3 833.3,332.8 835.6,333.6 838.8,328.9 841.9,324.2 844.2,335.2 847.3,339.6 850.0,349.7 852.8,342.7 855.6,348.2 858.3,351.3 861.4,343.5 864.5,334.9 867.7,327.8 870.8,349.7 873.1,360.7 875.5,352.8 878.6,349.7 881.7,348.2 884.8,352.8 887.2,348.9 890.3,356.0 893.4,356.0 896.6,356.8 899.4,357.8 902.8,351.3 905.2,347.4 907.8,341.9 910.6,355.2 913.8,352.8 916.9,353.6 920.0,349.7 922.3,340.3 925.0,330.2 927.8,331.0 930.0,343.5 930.9,351.5 933.7,353.3 936.3,354.5 939.4,349.1 942.4,347.9 945.4,347.2 948.4,356.3 950.9,359.4 953.9,369.0 956.7,361.2 959.6,356.9 962.4,358.1 965.4,349.7 968.1,355.7 970.8,356.3 973.9,360.0 976.9,361.2 979.7,363.6 982.6,357.5 985.4,358.1 988.2,354.5 990.8,357.5 994.2,366.6" stroke="#5e35b1" stroke-width="1.45"/>
<polyline points="299.4,357.5 302.5,354.4 304.8,359.1 307.2,357.5 310.3,367.7 313.4,383.3 315.8,351.3 318.1,364.6 320.5,353.6 322.8,356.0 324.7,367.7 327.0,356.8 329.1,373.9 330.9,386.4 333.0,380.2 335.3,369.2 336.9,365.3 339.2,369.2 341.6,371.6 343.9,374.7 346.2,377.8 348.6,379.4 350.9,375.5 353.3,364.6 355.6,347.4 357.2,341.1 359.5,338.0 362.7,330.0 365.0,338.8 367.3,353.6 369.7,370.8 372.0,361.4 374.4,353.6 376.7,341.1 378.3,355.2 379.8,367.7 382.2,353.6 385.3,342.7 387.7,347.4 390.0,355.2 392.3,363.0 394.4,375.5 396.2,366.1 398.6,374.7 400.9,361.4 403.3,347.4 404.8,345.0 407.2,358.3 409.1,347.4 411.1,361.4 413.4,347.4 415.0,366.9 416.9,338.0 419.4,355.2 422.0,331.8 425.2,334.9 428.3,339.6 430.6,358.3 433.0,363.0 435.3,359.9 437.7,331.8 440.0,353.6 442.8,313.0 445.5,331.8 447.8,352.1 450.0,359.9 452.3,364.4 454.7,351.9 457.0,348.8 459.4,356.6 462.5,312.0 465.6,313.6 468.8,326.9 471.9,345.6 473.4,348.8 475.8,326.9 478.1,328.4 480.5,323.8 483.1,305.8 485.2,325.3 487.5,348.8 489.8,356.6 491.4,336.2 493.8,355.0 496.1,340.9 498.4,350.3 500.8,353.4 503.9,336.2 506.2,339.4 508.6,330.0 510.9,348.8 513.3,358.1 515.6,336.2 518.0,331.6 520.3,331.6 522.7,338.6 525.0,344.1 527.3,350.3 529.7,340.9 531.6,335.5 534.4,347.2 536.7,359.7 539.8,331.6 542.2,334.7 543.8,342.5 546.1,350.3 548.4,353.4 550.8,345.6 553.1,351.9 556.2,347.2 559.4,348.8 562.5,331.6 566.1,320.6 568.8,344.1 571.1,356.6 574.2,350.3 578.1,328.4 580.5,329.2 582.8,344.1 585.9,342.5 588.3,350.3 590.6,356.6 593.0,351.9 595.3,347.2 597.7,326.1 599.2,348.8 601.6,361.2 603.9,370.6 606.2,364.4 608.6,373.8 610.0,359.7 612.3,361.2 614.7,356.6 617.0,351.9 619.4,349.5 621.7,353.4 624.1,362.8 626.4,348.8 628.8,336.2 631.1,344.1 633.4,347.2 635.8,353.4 638.1,356.6 640.5,350.3 642.8,344.1 645.2,350.3 647.5,347.2 649.8,353.4 652.2,358.1 654.5,359.7 656.9,364.4 660.0,367.5 662.3,359.7 664.7,336.2 667.0,320.6 669.4,331.6 671.7,350.3 674.1,358.1 676.4,361.2 678.3,376.9 680.3,359.7 682.2,344.1 684.2,333.9 686.6,347.2 688.9,358.1 690.5,364.4 692.8,359.7 695.2,362.8 697.5,365.2 699.8,356.6 702.2,348.8 704.5,336.2 707.2,328.4 709.2,341.7 713.1,328.9 715.5,313.3 718.1,296.9 721.2,318.8 724.1,296.9 727.2,307.0 730.3,328.9 731.9,347.2 733.4,340.9 735.8,362.8 738.4,300.8 741.2,296.9 744.1,307.0 746.7,293.0 749.8,289.8 752.5,325.0 755.6,338.3 758.4,295.3 761.2,330.5 764.4,328.1 767.0,282.0 770.0,314.8 772.8,341.4 775.5,332.1 778.6,321.9 780.9,321.9 784.4,310.2 787.2,317.2 790.0,318.0 793.1,333.6 795.8,334.4 798.1,330.5 801.7,288.0 805.2,312.5 808.3,332.1 810.3,322.7 813.0,339.1 816.1,318.0 819.2,319.6 821.6,321.9 824.4,313.3 827.5,289.9 830.2,318.0 833.3,332.8 835.6,332.1 838.8,306.3 841.6,311.8 844.2,299.2 847.5,282.4 850.0,308.6 852.8,330.5 855.9,345.0 859.1,363.0 860.6,362.2 863.0,338.8 865.0,282.4 867.7,303.2 870.8,314.9 873.1,349.7 876.2,348.9 879.1,311.8 881.7,330.5 884.8,325.8 887.5,321.1 890.6,333.6 893.4,322.7 896.2,335.2 899.4,326.6 902.0,340.3 904.8,273.5 907.5,301.6 910.6,325.8 913.4,352.8 916.1,332.1 919.2,328.2 921.9,359.1 925.0,291.4 927.8,314.9 930.0,319.6 930.9,333.3 933.3,328.5 936.3,352.7 939.4,341.2 942.4,328.5 945.4,313.3 948.4,329.7 950.9,338.2 953.9,364.8 956.7,348.5 959.6,332.7 962.4,328.2 965.4,332.1 968.4,350.3 971.2,337.3 973.9,338.8 976.9,340.6 979.7,332.1 982.6,322.7 985.4,327.9 988.2,331.5 990.8,347.2 993.2,353.3 994.2,349.1" stroke="#4285f4" stroke-width="1.45"/>
</svg>

</body></html>
